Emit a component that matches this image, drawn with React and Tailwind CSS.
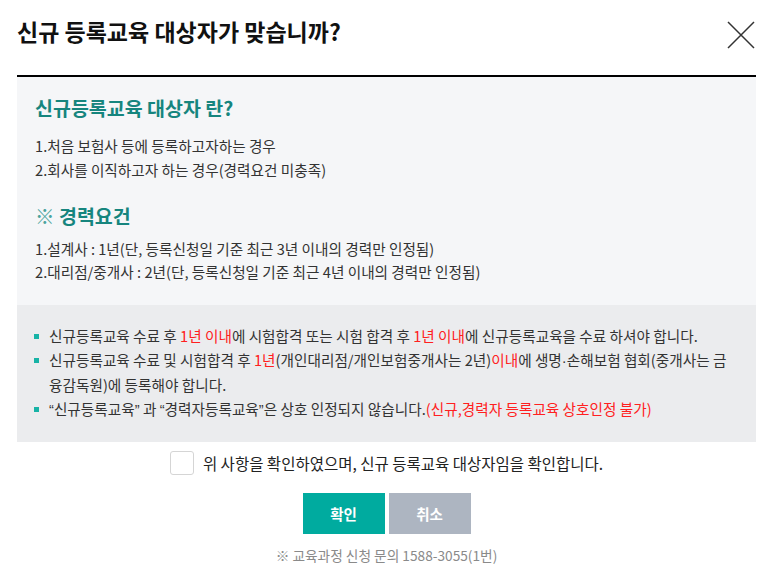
const font = { fontFamily: '"Noto Sans CJK KR", "Noto Sans", sans-serif' };
const latin = { fontFamily: '"Liberation Sans", sans-serif' };

function Bullet({ children }) {
  return (
    <li className="flex items-start gap-[10px]">
      <span className="mt-[10px] w-[5px] h-[5px] shrink-0 bg-[#17b3a6]" />
      <span className="break-all">{children}</span>
    </li>
  );
}

export default function App() {
  return (
    <div className="w-[773px] h-[586px] bg-white px-[17px] text-[#333]" style={font}>
      {/* 헤더 */}
      <header className="h-[77px] flex items-start justify-between border-b-2 border-black">
        <h1 className="mt-[15px] text-[23px] font-bold text-[#111] leading-[32px]">
          신규 등록교육 대상자가 맞습니까?
        </h1>
        <button className="mt-[21px] mr-[1px] w-[28px] h-[28px]" aria-label="닫기">
          <svg viewBox="0 0 28 28" className="w-[28px] h-[28px]">
            <path d="M1 1 L27 27 M27 1 L1 27" stroke="#333" strokeWidth="1.5" fill="none" />
          </svg>
        </button>
      </header>

      {/* 대상자 안내 */}
      <section className="bg-[#f5f6f8] px-[18px] pt-[16px] pb-[21px] text-[14.65px] leading-[24px]">
        <h2 className="text-[19.5px] font-bold text-[#16857e] leading-[30px] mb-[11px]">신규등록교육 대상자 란?</h2>
        <p>1.처음 보험사 등에 등록하고자하는 경우</p>
        <p>2.회사를 이직하고자 하는 경우(경력요건 미충족)</p>
        <h2 className="mt-[19px] mb-[6px] text-[19.5px] font-bold text-[#16857e] leading-[30px]">
          <span className="font-normal text-[#4aa49d]">※</span> 경력요건
        </h2>
        <p>1.설계사 : 1년(단, 등록신청일 기준 최근 3년 이내의 경력만 인정됨)</p>
        <p className="-mt-[1px]">2.대리점/중개사 : 2년(단, 등록신청일 기준 최근 4년 이내의 경력만 인정됨)</p>
      </section>

      <section className="bg-[#ebecee] pl-[17px] pr-[24px] pt-[19px] pb-[20px] text-[14.65px] leading-[24px]">
        <ul>
          <Bullet>
            신규등록교육 수료 후 <span className="text-[#ff2020]">1년 이내</span>에 시험합격 또는 시험 합격 후{" "}
            <span className="text-[#ff2020]">1년 이내</span>에 신규등록교육을 수료 하셔야 합니다.
          </Bullet>
          <Bullet>
            신규등록교육 수료 및 시험합격 후 <span className="text-[#ff2020]">1년</span>(개인대리점/개인보험중개사는 2년)
            <span className="text-[#ff2020]">이내</span>에 생명
            <span style={latin}>·</span>손해보험 협회(중개사는 금융감독원)에 등록해야 합니다.
          </Bullet>
          <Bullet>
            <span style={latin}>“</span>신규등록교육<span style={latin}>”</span> 과 <span style={latin}>“</span>경력자등록교육
            <span style={latin}>”</span>은 상호 인정되지 않습니다.
            <span className="text-[#ff2020]">(신규,경력자 등록교육 상호인정 불가)</span>
          </Bullet>
        </ul>
      </section>

      {/* 확인 체크 */}
      <label className="mt-[8px] flex items-center justify-center gap-[9px] text-[15.5px] leading-[26px]">
        <span className="w-[24px] h-[24px] rounded-[3px] border border-[#d5d5d5] bg-white" />
        <span className="text-[#222]">위 사항을 확인하였으며, 신규 등록교육 대상자임을 확인합니다.</span>
      </label>

      <div className="mt-[17px] flex justify-center gap-[4px]">
        <button className="w-[82px] h-[41px] bg-[#00ab9f] text-white text-[14.5px] font-bold">확인</button>
        <button className="w-[82px] h-[41px] bg-[#adb5c1] text-white text-[14.5px] font-bold">취소</button>
      </div>

      <p className="mt-[10px] text-center text-[13.7px] leading-[22px] text-[#8a8a8a]">※ 교육과정 신청 문의 1588-3055(1번)</p>
    </div>
  );
}
